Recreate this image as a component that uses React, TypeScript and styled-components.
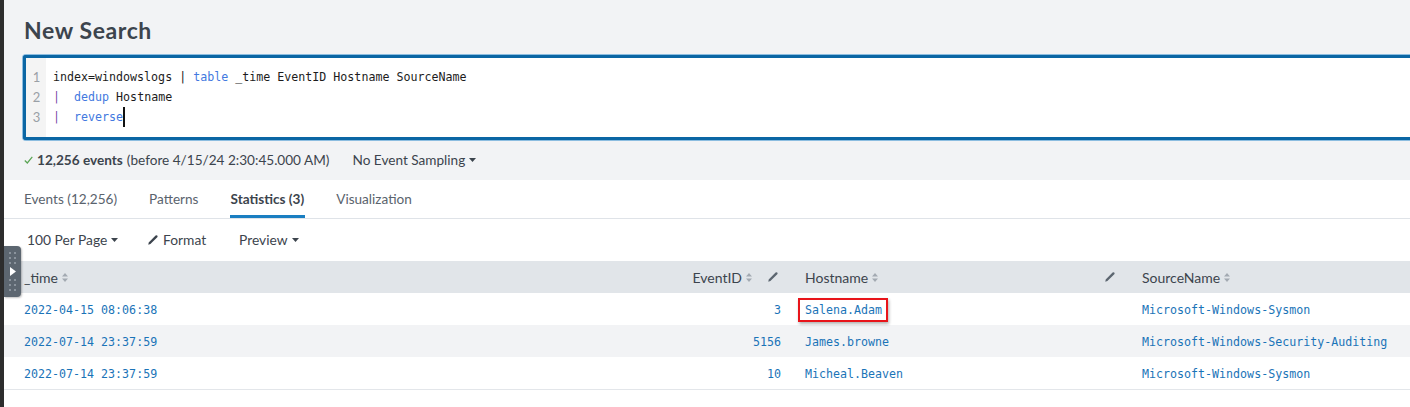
import React from "react";
import styled, { createGlobalStyle } from "styled-components";

const GlobalStyle = createGlobalStyle`
  html, body { margin: 0; padding: 0; background: #ffffff; }
  body { font-family: Lato, "Open Sans", sans-serif; color: #3c444d; }
  * { box-sizing: border-box; }
`;

const Page = styled.div`
  position: relative;
  display: flex;
  width: 1410px;
  height: 407px;
  overflow: hidden;
  background: #ffffff;
`;

const Strip = styled.div`
  width: 4px;
  flex: none;
  background: #2d2d2d;
`;

const Main = styled.div`
  flex: 1;
  min-width: 0;
  display: flex;
  flex-direction: column;
`;

const TopSection = styled.div`
  background: #f2f3f5;
  padding: 15px 0 10px 20px;
`;

const Title = styled.h1`
  margin: 0;
  font-size: 23px;
  line-height: 30px;
  font-weight: 700;
  letter-spacing: 0.6px;
  color: #3c444d;
`;

const Editor = styled.div`
  margin: 10px -20px 0 -1px;
  height: 85px;
  display: flex;
  background: #ffffff;
  border: 3px solid #0b66a4;
  border-right: none;
  border-radius: 3px 0 0 3px;
  box-shadow: 0 0 0 1px #8cbde0;
`;

const Gutter = styled.div`
  width: 20px;
  flex: none;
  background: #f4f4f4;
  padding-top: 9px;
`;

const LineNo = styled.div`
  height: 20px;
  line-height: 20px;
  text-align: center;
  font-family: Lato, sans-serif;
  font-size: 13px;
  color: #9aa0a6;
  padding-left: 1px;
`;

const Code = styled.div`
  padding: 9px 0 0 7px;
  font-family: "DejaVu Sans Mono", monospace;
  font-size: 11.65px;
  color: #1c1c1c;
`;

const CodeLine = styled.div`
  height: 20px;
  line-height: 20px;
  white-space: pre;
`;

const Kw = styled.span`
  color: #4279e0;
`;

const Pipe = styled.span`
  color: #7a4aa8;
`;

const Cursor = styled.span`
  display: inline-block;
  width: 2px;
  height: 20px;
  vertical-align: top;
  background: #111;
`;

const Status = styled.div`
  margin-top: 10px;
  height: 20px;
  display: flex;
  align-items: center;
  font-size: 13.6px;
  color: #3c444d;
`;

const Check = styled.svg`
  width: 9px;
  height: 8px;
  margin-right: 4px;
`;

const Bold = styled.b`
  font-weight: 700;
  margin-right: 4px;
`;

const Sampling = styled.span`
  display: inline-flex;
  align-items: center;
  margin-left: 23px;
`;

const Caret = styled.svg`
  width: 7px;
  height: 4px;
  margin-left: 4px;
  flex: none;
`;

const Tabs = styled.div`
  display: flex;
  gap: 30px;
  padding-left: 19px;
  height: 39px;
  border-bottom: 1px solid #dfe3e8;
`;

const Tab = styled.div<{ $active?: boolean }>`
  height: 38px;
  padding: 0 1px;
  display: flex;
  align-items: center;
  font-size: 13.6px;
  font-weight: ${(p) => (p.$active ? 700 : 400)};
  color: ${(p) => (p.$active ? "#3c444d" : "#5a636d")};
  border-bottom: 3px solid ${(p) => (p.$active ? "#1a7ec1" : "transparent")};
  padding-top: 3px;
  margin-bottom: -1px;
`;

const Toolbar = styled.div`
  height: 42px;
  display: flex;
  align-items: center;
  padding: 0 0 1px 23px;
  font-size: 13.8px;
  color: #3c444d;
`;

const ToolItem = styled.span<{ $w: number }>`
  display: inline-flex;
  align-items: center;
  width: ${(p) => p.$w}px;
`;

const Pencil = styled.svg`
  width: 10px;
  height: 10px;
  margin-right: 5px;
  flex: none;
`;

const Table = styled.div`
  display: flex;
  flex-direction: column;
  border-bottom: 1px solid #e3e6ea;
`;

const Row = styled.div<{ $bg: string }>`
  display: grid;
  grid-template-columns: 686px 99px 337px 1fr;
  height: 32px;
  background: ${(p) => p.$bg};
`;

const HeadCell = styled.div<{ $right?: boolean; $pad: number }>`
  display: flex;
  align-items: center;
  justify-content: ${(p) => (p.$right ? "flex-end" : "space-between")};
  padding: 0 8px 0 ${(p) => p.$pad}px;
  font-size: 14px;
  color: #3c444d;
  white-space: nowrap;
`;

const HeadLabel = styled.span`
  display: inline-flex;
  align-items: center;
`;

const Sort = styled.svg`
  width: 6px;
  height: 9px;
  margin-left: 4px;
  flex: none;
`;

const HeadPencil = styled.svg<{ $ml?: number }>`
  width: 10px;
  height: 10px;
  flex: none;
  margin-left: ${(p) => p.$ml ?? 0}px;
  margin-right: 3px;
`;

const Cell = styled.div<{ $right?: boolean; $pad: number }>`
  display: flex;
  align-items: center;
  justify-content: ${(p) => (p.$right ? "flex-end" : "flex-start")};
  padding: 1px 8px 0 ${(p) => p.$pad}px;
  font-family: "DejaVu Sans Mono", monospace;
  font-size: 11.65px;
  color: #1a74b8;
  white-space: pre;
`;

const Highlight = styled.span`
  position: relative;
  &::after {
    content: "";
    position: absolute;
    left: -7px;
    right: -6px;
    top: -5px;
    bottom: -5px;
    border: 2px solid #e8141a;
    box-shadow: 1px 2px 3px rgba(0, 0, 0, 0.3);
  }
`;

const Handle = styled.div`
  position: absolute;
  left: 4px;
  top: 246px;
  width: 17px;
  height: 51px;
  background: #5c6670;
  border-radius: 0 4px 4px 0;
  box-shadow: 1px 1px 2px rgba(0, 0, 0, 0.25);
  display: flex;
  flex-direction: column;
  align-items: center;
  justify-content: center;
  gap: 3px;
`;

const Dots = styled.div`
  display: grid;
  grid-template-columns: 2px 2px;
  grid-auto-rows: 2px;
  gap: 3px 3px;
  & > span { background: #8a939c; }
`;

const Play = styled.svg`
  width: 6px;
  height: 9px;
`;

const CaretIcon = () => (
  <Caret viewBox="0 0 7 4">
    <path d="M0 0 H7 L3.5 4 Z" fill="#3c444d" />
  </Caret>
);

const SortIcon = () => (
  <Sort viewBox="0 0 6 9">
    <path d="M3 0 L6 3.5 H0 Z M0 5.5 H6 L3 9 Z" fill="#a3aab2" />
  </Sort>
);

const PencilPath = ({ color }: { color: string }) => (
  <path d="M0.3 9.7 L0.7 7.4 L7.6 0.5 Q8.4 -0.2 9.2 0.6 Q10 1.4 9.3 2.2 L2.4 9.1 Z" fill={color} />
);

const rows = [
  { time: "2022-04-15 08:06:38", id: "3", host: "Salena.Adam", src: "Microsoft-Windows-Sysmon", hl: true },
  { time: "2022-07-14 23:37:59", id: "5156", host: "James.browne", src: "Microsoft-Windows-Security-Auditing" },
  { time: "2022-07-14 23:37:59", id: "10", host: "Micheal.Beaven", src: "Microsoft-Windows-Sysmon" },
];

export default function App() {
  return (
    <>
      <GlobalStyle />
      <Page>
        <Strip />
        <Main>
          <TopSection>
            <Title>New Search</Title>
            <Editor>
              <Gutter>
                <LineNo>1</LineNo>
                <LineNo>2</LineNo>
                <LineNo>3</LineNo>
              </Gutter>
              <Code>
                <CodeLine>
                  index=windowslogs | <Kw>table</Kw> _time EventID Hostname SourceName
                </CodeLine>
                <CodeLine>
                  <Pipe>|</Pipe>  <Kw>dedup</Kw> Hostname
                </CodeLine>
                <CodeLine>
                  <Pipe>|</Pipe>  <Kw>reverse</Kw>
                  <Cursor />
                </CodeLine>
              </Code>
            </Editor>
            <Status>
              <Check viewBox="0 0 9 8">
                <path d="M0.8 4.5 L3.3 7 L8.3 0.8" fill="none" stroke="#5aa454" strokeWidth="1.2" />
              </Check>
              <Bold>12,256 events</Bold>
              <span>(before 4/15/24 2:30:45.000 AM)</span>
              <Sampling>
                No Event Sampling
                <CaretIcon />
              </Sampling>
            </Status>
          </TopSection>

          <Tabs>
            <Tab>Events (12,256)</Tab>
            <Tab>Patterns</Tab>
            <Tab $active>Statistics (3)</Tab>
            <Tab>Visualization</Tab>
          </Tabs>

          <Toolbar>
            <ToolItem $w={121}>
              100 Per Page
              <CaretIcon />
            </ToolItem>
            <ToolItem $w={91}>
              <Pencil viewBox="0 0 10 10">
                <PencilPath color="#3c444d" />
              </Pencil>
              Format
            </ToolItem>
            <ToolItem $w={80}>
              Preview
              <CaretIcon />
            </ToolItem>
          </Toolbar>

          <Table>
            <Row $bg="#e1e5e9">
              <HeadCell $pad={20}>
                <HeadLabel>
                  _time
                  <SortIcon />
                </HeadLabel>
              </HeadCell>
              <HeadCell $pad={0} $right>
                <HeadLabel>
                  EventID
                  <SortIcon />
                </HeadLabel>
                <HeadPencil viewBox="0 0 10 10" $ml={16}>
                  <PencilPath color="#5c6670" />
                </HeadPencil>
              </HeadCell>
              <HeadCell $pad={16}>
                <HeadLabel>
                  Hostname
                  <SortIcon />
                </HeadLabel>
                <HeadPencil viewBox="0 0 10 10">
                  <PencilPath color="#5c6670" />
                </HeadPencil>
              </HeadCell>
              <HeadCell $pad={16}>
                <HeadLabel>
                  SourceName
                  <SortIcon />
                </HeadLabel>
              </HeadCell>
            </Row>
            {rows.map((r, i) => (
              <Row key={i} $bg={i % 2 === 1 ? "#f2f3f5" : "#ffffff"}>
                <Cell $pad={20}>{r.time}</Cell>
                <Cell $pad={8} $right>{r.id}</Cell>
                <Cell $pad={16}>{r.hl ? <Highlight>{r.host}</Highlight> : r.host}</Cell>
                <Cell $pad={16}>{r.src}</Cell>
              </Row>
            ))}
          </Table>
        </Main>
        <Handle>
          <Dots>
            <span /><span /><span /><span /><span /><span />
          </Dots>
          <Play viewBox="0 0 6 9">
            <path d="M0 0 L6 4.5 L0 9 Z" fill="#ffffff" />
          </Play>
          <Dots>
            <span /><span /><span /><span /><span /><span />
          </Dots>
        </Handle>
      </Page>
    </>
  );
}
